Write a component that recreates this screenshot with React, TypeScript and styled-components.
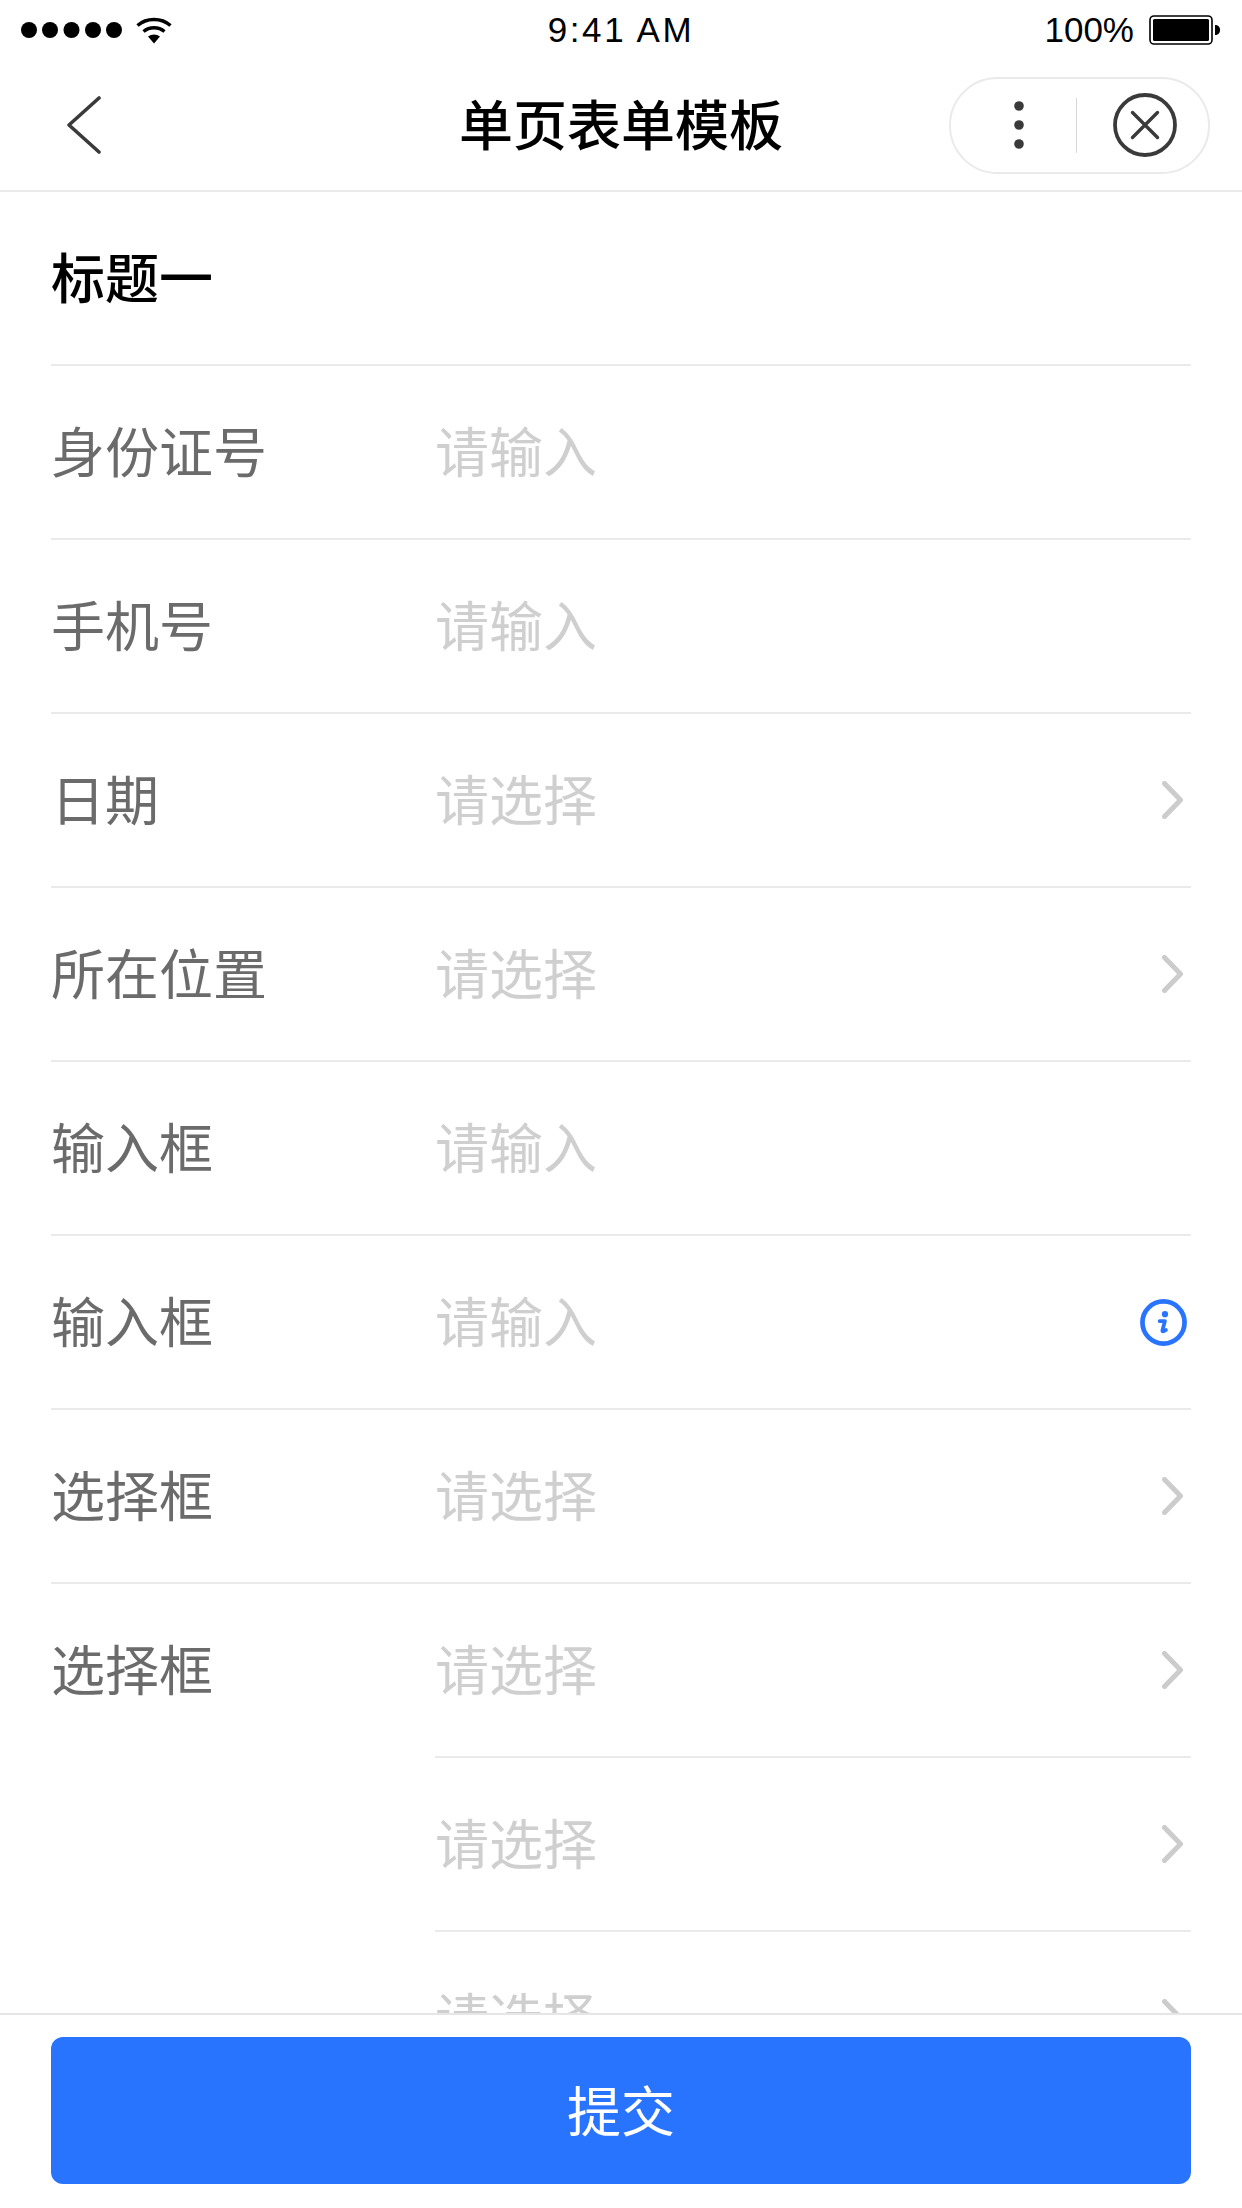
import styled, { createGlobalStyle } from 'styled-components';

const GlobalStyle = createGlobalStyle`
  html, body {
    margin: 0;
    padding: 0;
    background: #fff;
  }
  body {
    font-family: "Noto Sans CJK SC", "Liberation Sans", sans-serif;
  }
`;

const Page = styled.div`
  width: 1242px;
  height: 2208px;
  display: flex;
  flex-direction: column;
  overflow: hidden;
  background: #fff;
`;

const StatusBar = styled.div`
  height: 60px;
  flex: none;
  display: grid;
  grid-template-columns: 1fr auto 1fr;
  align-items: center;
  padding: 0 21px;
  font-family: "Liberation Sans", sans-serif;
  font-size: 35px;
  color: #000;
`;

const StatusLeft = styled.div`
  display: flex;
  align-items: center;
  gap: 13px;
`;

const StatusRight = styled.div`
  display: flex;
  align-items: center;
  justify-content: flex-end;
  gap: 15px;
`;

const Time = styled.span`
  letter-spacing: 2.6px;
`;

const NavBar = styled.header`
  height: 130px;
  flex: none;
  display: grid;
  grid-template-columns: 1fr auto 1fr;
  align-items: center;
  padding: 0 32px;
  border-bottom: 2px solid #eaeaea;
`;

const BackIcon = styled.svg`
  display: block;
  margin-left: 35px;
`;

const NavTitle = styled.h1`
  margin: 0 0 5px;
  font-size: 54px;
  font-weight: 500;
  line-height: 1;
  color: #000;
`;

const Capsule = styled.div`
  justify-self: end;
  width: 261px;
  height: 97px;
  box-sizing: border-box;
  border: 2px solid #eaeaea;
  border-radius: 49px;
  display: flex;
  align-items: center;
`;

const MenuSlot = styled.div`
  width: 125px;
  box-sizing: border-box;
  padding-left: 11px;
  display: flex;
  align-items: center;
  justify-content: center;
`;

const CloseSlot = styled.div`
  flex: 1;
  padding-left: 4px;
  display: flex;
  align-items: center;
  justify-content: center;
`;

const CapsuleDivider = styled.div`
  width: 1px;
  height: 55px;
  background: #d8d8d8;
`;

const Body = styled.main`
  flex: 1;
  min-height: 0;
  overflow: hidden;
  padding: 0 51px;
`;

const SectionTitle = styled.h2`
  margin: 0;
  height: 174px;
  box-sizing: border-box;
  padding-bottom: 5px;
  display: flex;
  align-items: center;
  font-size: 54px;
  font-weight: 500;
  color: #000;
  border-bottom: 2px solid #eaeaea;
`;

const Row = styled.div`
  display: flex;
  border-bottom: 2px solid #eaeaea;
`;

const Label = styled.div`
  width: 384px;
  flex: none;
  height: 172px;
  box-sizing: border-box;
  padding-bottom: 5px;
  display: flex;
  align-items: center;
  font-size: 54px;
  font-weight: 400;
  color: #6b6b6b;
`;

const Fields = styled.div`
  flex: 1;
  min-width: 0;
`;

const Field = styled.div`
  height: 172px;
  display: flex;
  align-items: center;
  justify-content: space-between;
  padding-right: 4px;
  & + & {
    border-top: 2px solid #eaeaea;
  }
`;

const Placeholder = styled.span`
  margin-bottom: 5px;
  font-size: 54px;
  font-weight: 400;
  color: #cfcfcf;
`;

const Chevron = styled.svg`
  display: block;
  margin-right: 4px;
`;

const InfoIcon = styled.svg`
  display: block;
`;

const Footer = styled.footer`
  flex: none;
  height: 195px;
  box-sizing: border-box;
  border-top: 2px solid #e6e6e6;
  padding: 22px 51px 24px;
  background: #fff;
`;

const SubmitButton = styled.button`
  width: 100%;
  height: 147px;
  padding: 0 0 5px;
  border: 0;
  border-radius: 12px;
  background: #2974ff;
  color: #fff;
  font-family: inherit;
  font-size: 54px;
  font-weight: 400;
`;

type FieldKind = 'input' | 'select' | 'info';

const rows: { label: string; fields: FieldKind[] }[] = [
  { label: '身份证号', fields: ['input'] },
  { label: '手机号', fields: ['input'] },
  { label: '日期', fields: ['select'] },
  { label: '所在位置', fields: ['select'] },
  { label: '输入框', fields: ['input'] },
  { label: '输入框', fields: ['info'] },
  { label: '选择框', fields: ['select'] },
  { label: '选择框', fields: ['select', 'select', 'select'] },
];

function ChevronRight() {
  return (
    <Chevron width="21" height="38" viewBox="0 0 21 38" fill="none">
      <path d="M2.5 2.5 18.5 19 2.5 35.5" stroke="#ccc" strokeWidth="5" strokeLinecap="round" strokeLinejoin="round" />
    </Chevron>
  );
}

function Info() {
  return (
    <InfoIcon width="47" height="47" viewBox="0 0 48 48" fill="none">
      <circle cx="24" cy="24" r="21.5" stroke="#2974ff" strokeWidth="4.8" />
      <circle cx="25.5" cy="15.5" r="3.2" fill="#2974ff" />
      <path d="M20 22.5h5.5l-2.6 9.5c-.3 1.2.8 1.6 3.6-.3" stroke="#2974ff" strokeWidth="3.8" strokeLinecap="round" strokeLinejoin="round" />
    </InfoIcon>
  );
}

function SignalDots() {
  return (
    <svg width="102" height="18" viewBox="0 0 102 18" fill="#000">
      {[8, 29, 50.5, 72, 93].map(cx => (
        <circle key={cx} cx={cx} cy="9" r="8" />
      ))}
    </svg>
  );
}

function Wifi() {
  return (
    <svg width="36" height="27" viewBox="0 0 36 27" fill="none">
      <path d="M1.5 8.5C10.5 .5 25.5 .5 34.5 8.5" stroke="#000" strokeWidth="3.4" />
      <path d="M7.5 14.5c6-5 15-5 21 0" stroke="#000" strokeWidth="3.4" />
      <path d="M12 19.5c3.5-2.7 8.5-2.7 12 0l-6 7z" fill="#000" />
    </svg>
  );
}

function Battery() {
  return (
    <svg width="72" height="30" viewBox="0 0 72 30" fill="none">
      <rect x="1" y="1" width="62" height="28" rx="4" stroke="#000" strokeWidth="1.6" />
      <rect x="4" y="4" width="56" height="22" rx="1.5" fill="#000" />
      <path d="M66 10c3 0 5 1.5 5 5s-2 5-5 5z" fill="#000" />
    </svg>
  );
}

export default function App() {
  return (
    <Page>
      <GlobalStyle />
      <StatusBar>
        <StatusLeft>
          <SignalDots />
          <Wifi />
        </StatusLeft>
        <Time>9:41 AM</Time>
        <StatusRight>
          <span>100%</span>
          <Battery />
        </StatusRight>
      </StatusBar>

      <NavBar>
        <BackIcon width="34" height="58" viewBox="0 0 34 58" fill="none">
          <path d="M32 2 2 29 32 56" stroke="#3a3a3a" strokeWidth="3.6" strokeLinecap="round" strokeLinejoin="round" />
        </BackIcon>
        <NavTitle>单页表单模板</NavTitle>
        <Capsule>
          <MenuSlot>
            <svg width="12" height="50" viewBox="0 0 12 50" fill="#3a3a3a">
              <circle cx="6" cy="6" r="4.8" />
              <circle cx="6" cy="25" r="4.8" />
              <circle cx="6" cy="44" r="4.8" />
            </svg>
          </MenuSlot>
          <CapsuleDivider />
          <CloseSlot>
            <svg width="64" height="64" viewBox="0 0 64 64" fill="none" stroke="#3a3a3a">
              <circle cx="32" cy="32" r="30" strokeWidth="3.8" />
              <path d="M19.5 19.5 44.5 44.5M44.5 19.5 19.5 44.5" strokeWidth="3.4" strokeLinecap="round" />
            </svg>
          </CloseSlot>
        </Capsule>
      </NavBar>

      <Body>
        <SectionTitle>标题一</SectionTitle>
        {rows.map((row, i) => (
          <Row key={i}>
            <Label>{row.label}</Label>
            <Fields>
              {row.fields.map((kind, j) => (
                <Field key={j}>
                  <Placeholder>{kind === 'select' ? '请选择' : '请输入'}</Placeholder>
                  {kind === 'select' && <ChevronRight />}
                  {kind === 'info' && <Info />}
                </Field>
              ))}
            </Fields>
          </Row>
        ))}
      </Body>

      <Footer>
        <SubmitButton>提交</SubmitButton>
      </Footer>
    </Page>
  );
}
